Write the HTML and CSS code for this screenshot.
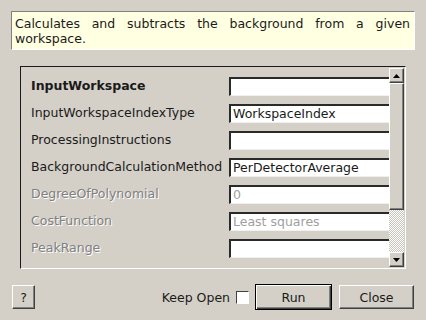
FILE: index.html
```html
<!DOCTYPE html>
<html>
<head>
<meta charset="utf-8">
<link rel="stylesheet" href="styles.css">
</head>
<body>
<div class="desc">Calculates and subtracts the background from a given workspace.</div>
<div class="frame">
  <div class="viewport">
    <div class="row"><span class="label bold">InputWorkspace</span><span class="input"></span></div>
    <div class="row"><span class="label">InputWorkspaceIndexType</span><span class="input">WorkspaceIndex</span></div>
    <div class="row"><span class="label">ProcessingInstructions</span><span class="input"></span></div>
    <div class="row"><span class="label">BackgroundCalculationMethod</span><span class="input">PerDetectorAverage</span></div>
    <div class="row"><span class="label disabled">DegreeOfPolynomial</span><span class="input dis">0</span></div>
    <div class="row"><span class="label disabled">CostFunction</span><span class="input dis">Least squares</span></div>
    <div class="row"><span class="label disabled">PeakRange</span><span class="input"></span></div>
  </div>
  <div class="vscroll">
    <div class="sbtn"><svg width="7" height="4" viewBox="0 0 7 4"><path d="M3.5 0 L7 4 L0 4 Z" fill="#000"/></svg></div>
    <div class="slider"></div>
    <div class="trough"></div>
    <div class="sbtn"><svg width="7" height="4" viewBox="0 0 7 4"><path d="M0 0 L7 0 L3.5 4 Z" fill="#000"/></svg></div>
  </div>
</div>
<div class="footer">
  <button class="btn help">?</button>
  <div class="spacer"></div>
  <span class="keep">Keep Open</span>
  <span class="check"></span>
  <button class="btn run">Run</button>
  <button class="btn close">Close</button>
</div>
</body>
</html>
```
FILE: styles.css
```css
html, body {
  margin: 0;
  padding: 0;
  background: #d4d0c8;
  font-family: "DejaVu Sans", sans-serif;
  font-size: 12.5px;
  color: #1a1a1a;
}
.desc {
  margin: 11px 11px 0 11px;
  height: 33px;
  padding: 4px 4px 0 3px;
  background: #ffffe1;
  border: 1px solid;
  border-color: #808080 #fff #fff #808080;
  text-align: justify;
  line-height: 15px;
  box-sizing: content-box;
  width: 395px;
}
.frame {
  margin: 16px 0 0 20px;
  width: 384px;
  height: 201px;
  border: 1px solid;
  border-color: #1a1a1a #fff #fff #1a1a1a;
  display: flex;
}
.viewport {
  flex: 1;
  overflow: hidden;
  padding: 10px 0 0 10px;
  display: flex;
  flex-direction: column;
  gap: 8px;
}
.row {
  display: flex;
  align-items: center;
  height: 19px;
  flex: none;
}
.label {
  width: 198px;
  flex: none;
  white-space: nowrap;
  position: relative;
  top: -1px;
}
.bold { font-weight: bold; }
.disabled {
  color: #808080;
  text-shadow: 1px 1px 0 #fff;
}
.input {
  flex: none;
  width: 170px;
  height: 19px;
  box-sizing: border-box;
  background: #fff;
  border-style: solid;
  border-width: 2px 0 1px 2px;
  border-color: #2a2a2a #fff #f0f0f0 #2a2a2a;
  line-height: 16px;
  padding-left: 2px;
  white-space: nowrap;
}
.input.dis { color: #a0a0a0; }
.vscroll {
  width: 15px;
  margin: 1px 1px 1px 0;
  display: flex;
  flex-direction: column;
}
.sbtn {
  height: 15px;
  box-sizing: border-box;
  border: 1px solid;
  border-color: #fff #404040 #404040 #fff;
  box-shadow: inset -1px -1px #808080;
  display: flex;
  align-items: center;
  justify-content: center;
  flex: none;
}
.slider {
  height: 127px;
  flex: none;
  box-sizing: border-box;
  border: 1px solid;
  border-color: #fff #404040 #404040 #fff;
  box-shadow: inset -1px -1px #808080;
}
.trough {
  flex: 1;
  background: repeating-conic-gradient(#fff 0 25%, #c8c4bc 0 50%) 0 0 / 2px 2px;
}
.footer {
  display: flex;
  align-items: center;
  margin: 15px 12px 0 12px;
  height: 26px;
}
.spacer { flex: 1; }
.btn {
  font-family: "DejaVu Sans", sans-serif;
  font-size: 12.5px;
  color: #1a1a1a;
  background: #d4d0c8;
  border: 1px solid;
  border-color: #fff #404040 #404040 #fff;
  box-shadow: inset -1px -1px #808080;
  height: 24px;
  padding: 0;
}
.help { width: 23px; }
.keep { margin-right: 6px; }
.check {
  width: 13px;
  height: 13px;
  box-sizing: border-box;
  background: #fff;
  border: 1px solid;
  border-color: #404040 #fff #fff #404040;
  margin-right: 6px;
}
.run {
  width: 77px;
  height: 26px;
  outline: none;
  border: 1px solid #000;
  box-shadow: inset 1px 1px #fff, inset -1px -1px #404040, inset -2px -2px #808080;
  margin-right: 7px;
}
.close { width: 75px; }
```
